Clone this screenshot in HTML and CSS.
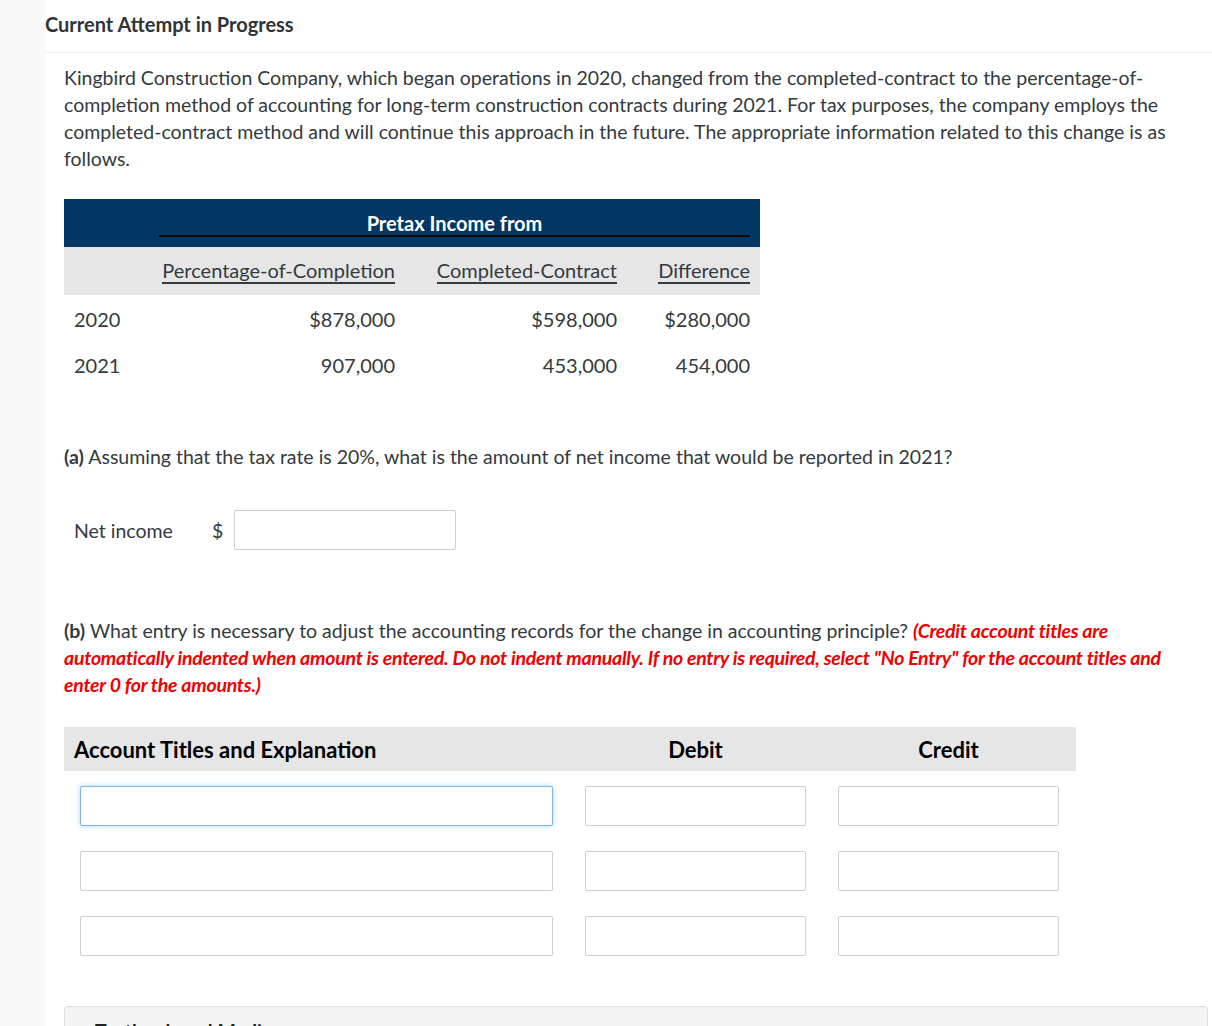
FILE: index.html
```html
<!DOCTYPE html>
<html lang="en">
<head>
<meta charset="utf-8">
<title>Current Attempt in Progress</title>
<link rel="stylesheet" href="styles.css">
</head>
<body>
<div class="page">
  <aside class="strip"></aside>
  <main class="main">
    <h1 class="attempt-title">Current Attempt in Progress</h1>
    <div class="content">
      <p class="intro">Kingbird Construction Company, which began operations in 2020, changed from the completed-contract to the percentage-of-completion method of accounting for long-term construction contracts during 2021. For tax purposes, the company employs the completed-contract method and will continue this approach in the future. The appropriate information related to this change is as follows.</p>

      <table class="data-table">
        <colgroup>
          <col class="w-year">
          <col class="w-1">
          <col class="w-2">
          <col class="w-3">
        </colgroup>
        <thead>
          <tr class="band">
            <th class="c-year"></th>
            <th class="c-group" colspan="3"><div class="group-label">Pretax Income from</div></th>
          </tr>
          <tr class="sub">
            <th class="c-year"></th>
            <th class="c-num"><span class="ul">Percentage-of-Completion</span></th>
            <th class="c-num"><span class="ul">Completed-Contract</span></th>
            <th class="c-num"><span class="ul">Difference</span></th>
          </tr>
        </thead>
        <tbody>
          <tr>
            <td class="c-year">2020</td>
            <td class="c-num">$878,000</td>
            <td class="c-num">$598,000</td>
            <td class="c-num">$280,000</td>
          </tr>
          <tr>
            <td class="c-year">2021</td>
            <td class="c-num">907,000</td>
            <td class="c-num">453,000</td>
            <td class="c-num">454,000</td>
          </tr>
        </tbody>
      </table>

      <p class="question q-a"><b>(a)</b> Assuming that the tax rate is 20%, what is the amount of net income that would be reported in 2021?</p>

      <div class="answer-row">
        <span class="answer-label">Net income</span>
        <span class="currency">$</span>
        <input class="field field-net" type="text" aria-label="Net income">
      </div>

      <p class="question q-b"><b>(b)</b> What entry is necessary to adjust the accounting records for the change in accounting principle? <em class="note">(Credit account titles are automatically indented when amount is entered. Do not indent manually. If no entry is required, select "No Entry" for the account titles and enter 0 for the amounts.)</em></p>

      <div class="journal">
        <div class="j-head">
          <div class="j-col j-acct">Account Titles and Explanation</div>
          <div class="j-col j-amt">Debit</div>
          <div class="j-col j-amt">Credit</div>
        </div>
        <div class="j-row">
          <div class="j-col j-acct"><input class="field focused" type="text" aria-label="Account title 1"></div>
          <div class="j-col j-amt"><input class="field" type="text" aria-label="Debit 1"></div>
          <div class="j-col j-amt"><input class="field" type="text" aria-label="Credit 1"></div>
        </div>
        <div class="j-row">
          <div class="j-col j-acct"><input class="field" type="text" aria-label="Account title 2"></div>
          <div class="j-col j-amt"><input class="field" type="text" aria-label="Debit 2"></div>
          <div class="j-col j-amt"><input class="field" type="text" aria-label="Credit 2"></div>
        </div>
        <div class="j-row">
          <div class="j-col j-acct"><input class="field" type="text" aria-label="Account title 3"></div>
          <div class="j-col j-amt"><input class="field" type="text" aria-label="Debit 3"></div>
          <div class="j-col j-amt"><input class="field" type="text" aria-label="Credit 3"></div>
        </div>
      </div>

      <div class="media-box">
        <div class="media-title">Textbook and Media</div>
      </div>
    </div>
  </main>
</div>
</body>
</html>
```

FILE: styles.css
```css
html, body {
  margin: 0;
  padding: 0;
  background: #ffffff;
}

body {
  font-family: Lato, "Open Sans", "Liberation Sans", sans-serif;
  font-size: 19.5px;
  color: #333a40;
  overflow: hidden;
}

.page {
  display: flex;
  min-height: 1026px;
}

.strip {
  flex: 0 0 45px;
  background: #f9f9f9;
}

.main {
  flex: 1 1 auto;
  min-width: 0;
}

.attempt-title {
  margin: 0;
  padding: 11px 0 15px 0;
  font-size: 20px;
  line-height: 26px;
  font-weight: 700;
  color: #2f3438;
  border-bottom: 1px solid #ececec;
}

.content {
  padding: 0 19px 0 19px;
}

.intro {
  margin: 11px 0 0 0;
  line-height: 27px;
}

/* Pretax income table */
.data-table {
  margin-top: 27px;
  border-collapse: collapse;
  table-layout: fixed;
  width: 696px;
  font-size: 20px;
}

.w-year { width: 85px; }
.w-1 { width: 256px; }
.w-2 { width: 222px; }
.w-3 { width: 133px; }

.data-table th,
.data-table td {
  padding: 0 10px;
  font-weight: 400;
}

.data-table .c-year {
  text-align: left;
}

.band {
  background: #033763;
}

.band th {
  height: 48px;
  box-sizing: border-box;
}

.band .c-group {
  padding: 12px 10px 10px 10px;
  vertical-align: top;
}

.group-label {
  color: #ffffff;
  font-weight: 700;
  text-align: center;
  line-height: 24px;
  border-bottom: 2px solid #0b0b0b;
}

.sub {
  background: #e6e6e6;
}

.sub th {
  height: 48px;
  white-space: nowrap;
}

.c-num {
  text-align: right;
}

.ul {
  display: inline-block;
  line-height: 22px;
  padding-bottom: 1px;
  border-bottom: 2px solid #333a40;
}

.data-table tbody td {
  height: 46px;
  line-height: 22px;
}

.data-table tbody tr:first-child td {
  padding-top: 1px;
}

.question {
  margin: 0;
  line-height: 27px;
}

.q-a {
  margin-top: 55px;
}

.question b {
  font-weight: 700;
}

.answer-row {
  display: flex;
  align-items: center;
  margin-top: 40px;
  padding-left: 10px;
}

.answer-label {
  width: 138px;
}

.currency {
  width: 22px;
}

.field {
  box-sizing: border-box;
  height: 40px;
  border: 1px solid #cfcfcf;
  border-radius: 2px;
  background: #ffffff;
  padding: 0 8px;
  font-family: inherit;
  font-size: 16px;
  outline: none;
  margin: 0;
}

.field-net {
  width: 222px;
}

.field.focused {
  border-color: #7cb7ea;
  box-shadow: 0 0 5px rgba(102, 175, 233, 0.55);
}

.q-b {
  margin-top: 67px;
}

.note {
  color: #f00000;
  font-style: italic;
  font-weight: 700;
  letter-spacing: -0.25px;
}

/* Journal */
.journal {
  margin-top: 29px;
  width: 1012px;
}

.j-head {
  display: flex;
  align-items: center;
  height: 44px;
  background: #e6e6e6;
  color: #000000;
  font-weight: 700;
  font-size: 22px;
}

.j-head .j-acct {
  padding-left: 10px;
}

.j-col.j-acct {
  flex: 0 0 505px;
  box-sizing: border-box;
}

.j-col.j-amt {
  flex: 0 0 253px;
  box-sizing: border-box;
  text-align: center;
}

.j-row {
  display: flex;
  margin-top: 15px;
}

.j-row + .j-row {
  margin-top: 25px;
}

.j-row .j-acct {
  padding: 0 16px;
}

.j-row .j-amt {
  padding: 0 16px;
}

.j-row .field {
  width: 100%;
  display: block;
}

.media-box {
  margin-top: 50px;
  margin-right: -15px;
  height: 60px;
  background: #f4f4f4;
  border: 1px solid #dedede;
  border-radius: 4px;
}

.media-title {
  padding: 12px 0 0 30px;
  font-weight: 700;
  color: #222;
}
```
